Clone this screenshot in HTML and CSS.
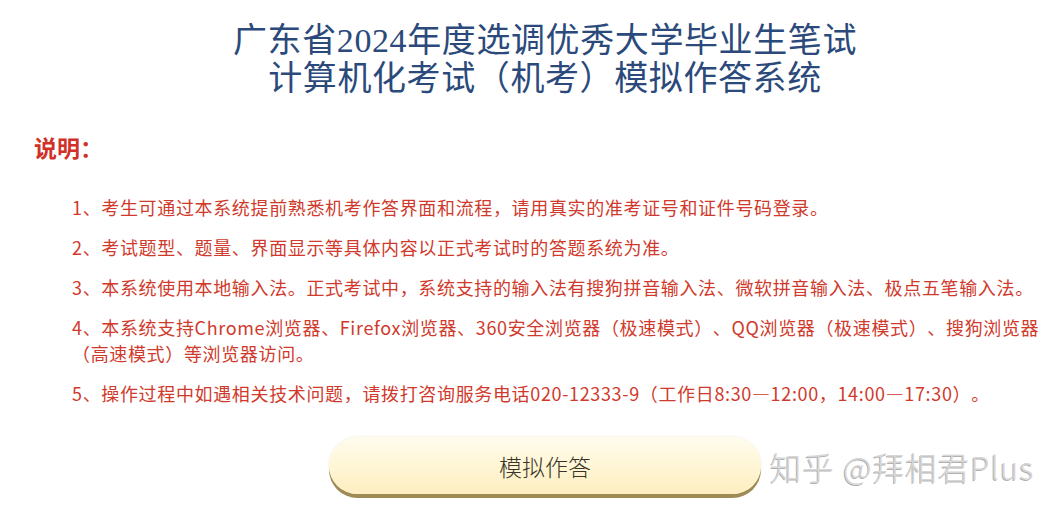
FILE: index.html
```html
<!DOCTYPE html>
<html lang="zh-CN">
<head>
<meta charset="utf-8">
<title>模拟作答系统</title>
<link rel="stylesheet" href="styles.css">
</head>
<body>
<div class="page">
  <header class="header">
    <h1 class="title">广东省2024年度选调优秀大学毕业生笔试<br>计算机化考试（机考）模拟作答系统</h1>
  </header>
  <section class="notes">
    <h2 class="notes-title">说明：</h2>
    <ol class="notes-list">
      <li>1、考生可通过本系统提前熟悉机考作答界面和流程，请用真实的准考证号和证件号码登录。</li>
      <li>2、考试题型、题量、界面显示等具体内容以正式考试时的答题系统为准。</li>
      <li>3、本系统使用本地输入法。正式考试中，系统支持的输入法有搜狗拼音输入法、微软拼音输入法、极点五笔输入法。</li>
      <li>4、本系统支持Chrome浏览器、Firefox浏览器、360安全浏览器（极速模式）、QQ浏览器（极速模式）、搜狗浏览器<br>（高速模式）等浏览器访问。</li>
      <li>5、操作过程中如遇相关技术问题，请拨打咨询服务电话020-12333-9（工作日8:30—12:00，14:00—17:30）。</li>
    </ol>
  </section>
  <div class="actions">
    <button class="start-btn" type="button">模拟作答</button>
  </div>
  <div class="watermark">知乎 @拜相君Plus</div>
</div>
</body>
</html>
```
FILE: styles.css
```css
html, body {
  margin: 0;
  padding: 0;
  background: #ffffff;
}
.page {
  position: relative;
  width: 1062px;
  height: 515px;
  overflow: hidden;
  padding-top: 22px;
  box-sizing: border-box;
  text-spacing-trim: space-all;
}
.header {
  padding-left: 28px;
}
.title {
  margin: 0;
  text-align: center;
  font-family: "Liberation Serif", "Noto Sans CJK SC", serif;
  font-weight: normal;
  font-size: 34px;
  line-height: 38px;
  letter-spacing: 0.6px;
  color: #2b4a7b;
}
.notes {
  margin-top: 34px;
  font-family: "Noto Sans CJK SC", sans-serif;
  color: #d03a2c;
}
.notes-title {
  margin: 0 0 0 34px;
  font-size: 23px;
  line-height: 30px;
  font-weight: bold;
  color: #d0322a;
}
.notes-list {
  list-style: none;
  margin: 32px 0 0 0;
  padding: 0 0 0 72px;
}
.notes-list li {
  font-size: 18px;
  line-height: 26px;
  letter-spacing: 0.65px;
  margin-bottom: 14px;
  white-space: nowrap;
}
.notes-list li:last-child {
  margin-bottom: 0;
}
.dash {
  letter-spacing: 0;
}
.actions {
  margin-top: 31px;
  padding-left: 28px;
  display: flex;
  justify-content: center;
}
.start-btn {
  width: 432px;
  height: 57px;
  border: none;
  border-radius: 29px;
  background: linear-gradient(to bottom, #fffcee 0%, #fff6d6 50%, #fdeec0 100%);
  box-shadow: 0 4px 0 #9e8b55, 0 0 2px rgba(200, 180, 120, 0.4);
  font-family: "Noto Sans CJK SC", sans-serif;
  font-size: 23px;
  font-weight: 300;
  color: #3a3528;
  cursor: pointer;
}
.watermark {
  position: absolute;
  left: 770px;
  top: 446px;
  font-family: "Noto Sans CJK SC", sans-serif;
  font-size: 31.5px;
  font-weight: 300;
  line-height: 40px;
  letter-spacing: 1px;
  color: #d6d6d6;
  text-shadow: -1px 1px 0 rgba(110, 110, 110, 0.55);
  white-space: nowrap;
}
```
